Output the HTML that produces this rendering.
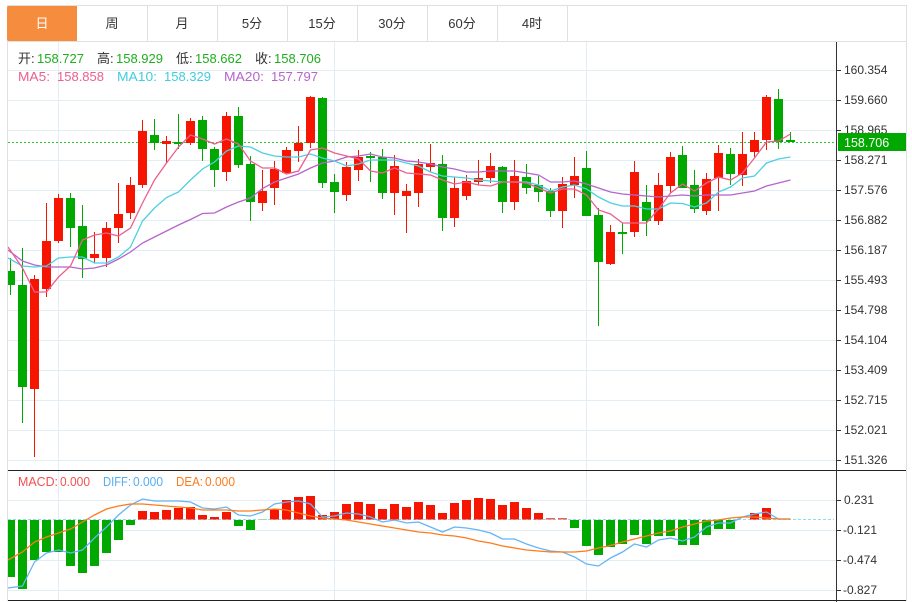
<!DOCTYPE html>
<html lang="zh">
<head>
<meta charset="utf-8">
<title>K线图</title>
<style>
html,body{margin:0;padding:0;background:#fff;width:912px;height:602px;overflow:hidden}
svg{display:block}
text{font-family:"Liberation Sans","Noto Sans CJK SC",sans-serif}
.tab{font-size:13px;fill:#333;text-anchor:middle}
.ax{font-size:12px;fill:#333}
.leg{font-size:13px}
</style>
</head>
<body>
<svg width="912" height="602" viewBox="0 0 912 602" xmlns="http://www.w3.org/2000/svg">
<defs><clipPath id="c"><rect x="8" y="42" width="828" height="428"/></clipPath><clipPath id="m"><rect x="8" y="471" width="828" height="129"/></clipPath></defs>

<!-- frame & tabs -->
<rect x="7.5" y="5.5" width="899" height="595" fill="#fff" stroke="#e0e0e0"/>
<path d="M7 41.5H907" stroke="#e0e0e0" fill="none"/>
<path d="M147.500 5V41M217.500 5V41M287.500 5V41M357.500 5V41M427.500 5V41M497.500 5V41M567.500 5V41" stroke="#e0e0e0" fill="none"/>
<path d="M78 6H10a2 2 0 0 0-2 2V39a2 2 0 0 0 2 2H78z" fill="#f58c3e" transform="translate(-1 0)"/>
<text class="tab" x="42" y="28" style="fill:#fff">日</text>
<text class="tab" x="112" y="28">周</text>
<text class="tab" x="182" y="28">月</text>
<text class="tab" x="252" y="28">5分</text>
<text class="tab" x="322" y="28">15分</text>
<text class="tab" x="392" y="28">30分</text>
<text class="tab" x="462" y="28">60分</text>
<text class="tab" x="532" y="28">4时</text>

<!-- grid -->
<path d="M8 70.500H836M8 100.500H836M8 130.500H836M8 160.500H836M8 190.500H836M8 220.500H836M8 250.500H836M8 280.500H836M8 310.500H836M8 340.500H836M8 370.500H836M8 400.500H836M8 430.500H836M8 460.500H836M8 500.500H836M8 530.500H836M8 560.500H836M8 590.500H836" stroke="#e3edf4" fill="none"/>
<path d="M58.500 42V600M334.500 42V600M586.500 42V600" stroke="#e3edf4" fill="none"/>
<path d="M8 142.500H836" stroke="#33c433" stroke-dasharray="2 2" fill="none"/>

<g clip-path="url(#c)">
<!-- red wicks and bodies -->
<path d="M34.500 275V457M46.500 203V297M58.500 194V243M94.500 232V263M106.500 222V267M118.500 183V243M130.500 177V219M142.500 120V188M166.500 136V163M190.500 118V145M226.500 112V181M262.500 170V211M274.500 161V205M286.500 147V173M298.500 126V162M310.500 96V148M346.500 162V201M358.500 150V181M394.500 155V215M406.500 184V233M418.500 159V207M430.500 144V172M454.500 177V227M466.500 175V200M478.500 160V185M490.500 153V183M514.500 160V210M562.500 177V228M574.500 157V198M610.500 225V265M634.500 161V237M658.500 173V225M670.500 152V193M706.500 173V215M718.500 145V211M742.500 132V186M754.500 132V157M766.500 95V150" stroke="#f51500" fill="none"/>
<path fill="#f51500" d="M30 279h9V389h-9zM42 241h9V289h-9zM54 198h9V241h-9zM90 254h9V258h-9zM102 228h9V258h-9zM114 214h9V228h-9zM126 185h9V213h-9zM138 131h9V185h-9zM162 141h9V144h-9zM186 121h9V143h-9zM222 116h9V172h-9zM258 191h9V203h-9zM270 169h9V188h-9zM282 150h9V173h-9zM294 143h9V151h-9zM306 97h9V143h-9zM342 167h9V195h-9zM354 157h9V170h-9zM390 166h9V193h-9zM402 191h9V196h-9zM414 164h9V193h-9zM426 163h9V167h-9zM450 188h9V218h-9zM462 181h9V196h-9zM474 178h9V182h-9zM486 166h9V178h-9zM510 176h9V202h-9zM558 184h9V211h-9zM570 176h9V185h-9zM606 232h9V264h-9zM630 172h9V232h-9zM654 185h9V221h-9zM666 157h9V186h-9zM702 179h9V211h-9zM714 153h9V178h-9zM738 154h9V175h-9zM750 140h9V152h-9zM762 97h9V140h-9z"/>
<!-- green wicks and bodies -->
<path d="M10.500 258V295M22.500 248V423M70.500 193V247M82.500 205V278M154.500 119V150M178.500 114V149M202.500 116V161M214.500 147V187M238.500 107V168M250.500 156V221M322.500 97V188M334.500 174V213M370.500 152V182M382.500 149V199M442.500 155V231M502.500 166V213M526.500 164V194M538.500 176V202M550.500 188V217M586.500 151V216M598.500 208V326M622.500 223V254M646.500 185V236M682.500 146V188M694.500 170V213M730.500 148V185M778.500 89V149M790.500 132V142" stroke="#00a800" fill="none"/>
<path fill="#00a800" d="M6 271h9V285h-9zM18 285h9V387h-9zM66 198h9V228h-9zM78 226h9V259h-9zM150 135h9V143h-9zM174 142h9V144h-9zM198 120h9V149h-9zM210 149h9V170h-9zM234 116h9V165h-9zM246 164h9V202h-9zM318 98h9V183h-9zM330 182h9V192h-9zM366 156h9V158h-9zM378 157h9V193h-9zM438 164h9V218h-9zM498 167h9V202h-9zM522 177h9V188h-9zM534 185h9V192h-9zM546 191h9V211h-9zM582 168h9V216h-9zM594 215h9V262h-9zM618 232h9V234h-9zM642 202h9V221h-9zM678 155h9V188h-9zM690 185h9V209h-9zM726 154h9V174h-9zM774 99h9V142h-9zM786 140h9V142h-9z"/>
<!-- MA20 -->
<polyline fill="none" stroke="#b565cc" stroke-width="1.300" points="8,250 22.500,261 34.500,265 46.500,267 58.500,267 70.500,267 82.500,269 94.500,268 106.500,265 118.500,259 130.500,252 142.500,243 154.500,237 166.500,231 178.500,225 190.500,219.500 202.500,213.500 214.500,213 226.500,207 238.500,202 250.500,198 262.500,188.500 274.500,182 286.500,178 298.500,174 310.500,168 322.500,163 334.500,161 346.500,157 358.500,156 370.500,154 382.500,157 394.500,158 406.500,161 418.500,162 430.500,164 442.500,167 454.500,169 466.500,172 478.500,172 490.500,171 502.500,171 514.500,171 526.500,173 538.500,175 550.500,182 562.500,182 574.500,181 586.500,184 598.500,188 610.500,192 622.500,194 634.500,195 646.500,196 658.500,197 670.500,196 682.500,195 694.500,196 706.500,195 718.500,195 730.500,195 742.500,193 754.500,191 766.500,186 778.500,183 790.500,180"/>
<!-- MA10 -->
<polyline fill="none" stroke="#4dd0e1" stroke-width="1.300" points="8,258 22.500,266 34.500,267 46.500,266 58.500,258 70.500,257 82.500,257 94.500,263 106.500,263 118.500,257 130.500,247 142.500,221 154.500,208 166.500,197.500 178.500,192 190.500,180 202.500,169 214.500,162 226.500,151 238.500,146 250.500,147 262.500,153 274.500,156 286.500,157 298.500,157 310.500,154 322.500,158 334.500,161 346.500,166 358.500,164 370.500,160 382.500,160 394.500,160 406.500,163 418.500,166 430.500,172 442.500,176 454.500,177 466.500,178 478.500,180 490.500,181 502.500,182 514.500,182 526.500,182 538.500,185 550.500,191 562.500,187 574.500,185 586.500,189 598.500,197 610.500,203 622.500,206 634.500,206 646.500,209 658.500,209 670.500,203 682.500,203.500 694.500,207 706.500,203 718.500,192 730.500,187 742.500,178 754.500,176 766.500,163 778.500,159 790.500,157"/>
<!-- MA5 -->
<polyline fill="none" stroke="#ec5f8f" stroke-width="1.300" points="8,247 22.500,268 34.500,292 46.500,292 58.500,277 70.500,266 82.500,240 94.500,235 106.500,233 118.500,236 130.500,228 142.500,203 154.500,180 166.500,163 178.500,147 190.500,135 202.500,139 214.500,144 226.500,139 238.500,144 250.500,161 262.500,168 274.500,168 286.500,174 298.500,171 310.500,150 322.500,148 334.500,153 346.500,156 358.500,159 370.500,171 382.500,173 394.500,168 406.500,173 418.500,174 430.500,175 442.500,180 454.500,184 466.500,182 478.500,185 490.500,186 502.500,182 514.500,182 526.500,183 538.500,188 550.500,193 562.500,189 574.500,189 586.500,195 598.500,210 610.500,214 622.500,223 634.500,223 646.500,223 658.500,209 670.500,193 682.500,184 694.500,191 706.500,183 718.500,177 730.500,180 742.500,173 754.500,158 766.500,142 778.500,141 790.500,134"/>
</g>

<g clip-path="url(#m)">
<path d="M8 519.500H834" stroke="#8fdcf0" stroke-dasharray="3 2" fill="none"/>
<path fill="#00a800" d="M6 520h9V577h-9zM18 520h9V589h-9zM30 520h9V560h-9zM42 520h9V552h-9zM54 520h9V552h-9zM66 520h9V566h-9zM78 520h9V573h-9zM90 520h9V566h-9zM102 520h9V553h-9zM114 520h9V540h-9zM126 520h9V525h-9zM234 520h9V526h-9zM246 520h9V530h-9zM570 520h9V528h-9zM582 520h9V546h-9zM594 520h9V555h-9zM606 520h9V547h-9zM618 520h9V544h-9zM630 520h9V535h-9zM642 520h9V544h-9zM654 520h9V536h-9zM666 520h9V536h-9zM678 520h9V545h-9zM690 520h9V545h-9zM702 520h9V535h-9zM714 520h9V529h-9zM726 520h9V529h-9z"/>
<rect x="258" y="519" width="9" height="1" fill="#9fdcae"/>
<path fill="#f51500" d="M138 511h9V519.500h-9zM150 512h9V519.500h-9zM162 510h9V519.500h-9zM174 508h9V519.500h-9zM186 507h9V519.500h-9zM198 515h9V519.500h-9zM210 517h9V519.500h-9zM222 512h9V519.500h-9zM270 509h9V519.500h-9zM282 500h9V519.500h-9zM294 497h9V519.500h-9zM306 496h9V519.500h-9zM318 515h9V519.500h-9zM330 512h9V519.500h-9zM342 504h9V519.500h-9zM354 502h9V519.500h-9zM366 504h9V519.500h-9zM378 509h9V519.500h-9zM390 504h9V519.500h-9zM402 507h9V519.500h-9zM414 502h9V519.500h-9zM426 505h9V519.500h-9zM438 513h9V519.500h-9zM450 503h9V519.500h-9zM462 500h9V519.500h-9zM474 498h9V519.500h-9zM486 499h9V519.500h-9zM498 505h9V519.500h-9zM510 502h9V519.500h-9zM522 508h9V519.500h-9zM534 513h9V519.500h-9zM750 513h9V519.500h-9zM762 508h9V519.500h-9z"/>
<rect x="546" y="518" width="9" height="1.500" fill="#f0605a"/><rect x="558" y="518" width="9" height="1.500" fill="#f0605a"/>
<polyline fill="none" stroke="#64b5f6" stroke-width="1.300" points="8,588 22.500,586 34.500,562 46.500,553 58.500,550 70.500,553 82.500,550 94.500,538 106.500,527 118.500,515 130.500,505 142.500,499 154.500,501 166.500,501 178.500,501 190.500,502 202.500,508 214.500,509 226.500,507 238.500,515 250.500,516 262.500,512 274.500,504 286.500,502 298.500,501 310.500,504 322.500,517 334.500,516 346.500,513 358.500,514 370.500,517 382.500,522 394.500,520 406.500,523 418.500,522 430.500,527 442.500,532 454.500,527 466.500,528 478.500,530 490.500,533 502.500,539 514.500,539 526.500,544 538.500,548 550.500,551 562.500,552 574.500,557 586.500,564 598.500,566 610.500,558 622.500,552 634.500,544 646.500,547 658.500,540 670.500,538 682.500,541 694.500,537 706.500,527 718.500,523 730.500,523 742.500,517 754.500,514 766.500,512 778.500,519 790.500,519"/>
<polyline fill="none" stroke="#ff7b1a" stroke-width="1.300" points="8,560 22.500,552 34.500,542 46.500,537 58.500,533 70.500,529 82.500,522 94.500,515 106.500,509 118.500,506 130.500,504 142.500,504 154.500,505 166.500,506 178.500,507 190.500,508 202.500,510 214.500,510 226.500,510 238.500,511 250.500,511 262.500,510 274.500,509 286.500,510 298.500,513 310.500,516 322.500,518 334.500,519 346.500,520 358.500,522 370.500,524 382.500,526 394.500,528 406.500,530 418.500,532 430.500,533 442.500,535 454.500,536 466.500,538 478.500,541 490.500,543 502.500,546 514.500,548 526.500,550 538.500,551 550.500,552 562.500,552 574.500,552 586.500,551 598.500,548 610.500,545.500 622.500,542 634.500,539 646.500,536 658.500,533 670.500,531 682.500,527 694.500,524 706.500,521 718.500,520 730.500,518 742.500,517 754.500,517 766.500,518 778.500,519 790.500,519"/>
</g>

<!-- axes -->
<path d="M8 470.500H906M8 600.500H906" stroke="#222" fill="none"/>
<path d="M836.500 42V602" stroke="#333" fill="none"/>
<path d="M837 70.500h4M837 100.500h4M837 130.500h4M837 160.500h4M837 190.500h4M837 220.500h4M837 250.500h4M837 280.500h4M837 310.500h4M837 340.500h4M837 370.500h4M837 400.500h4M837 430.500h4M837 460.500h4M837 500.500h4M837 530.500h4M837 560.500h4M837 590.500h4" stroke="#333" fill="none"/>

<g class="ax">
<text class="ax" x="844" y="74">160.354</text>
<text class="ax" x="844" y="104">159.660</text>
<text class="ax" x="844" y="134">158.965</text>
<text class="ax" x="844" y="164">158.271</text>
<text class="ax" x="844" y="194">157.576</text>
<text class="ax" x="844" y="224">156.882</text>
<text class="ax" x="844" y="254">156.187</text>
<text class="ax" x="844" y="284">155.493</text>
<text class="ax" x="844" y="314">154.798</text>
<text class="ax" x="844" y="344">154.104</text>
<text class="ax" x="844" y="374">153.409</text>
<text class="ax" x="844" y="404">152.715</text>
<text class="ax" x="844" y="434">152.021</text>
<text class="ax" x="844" y="464">151.326</text>
<text class="ax" x="844" y="504">0.231</text>
<text class="ax" x="843" y="534">-0.121</text>
<text class="ax" x="843" y="564">-0.474</text>
<text class="ax" x="843" y="594">-0.827</text>
</g>
<rect x="838" y="133" width="68" height="18" fill="#00a800"/>
<text class="ax" x="844" y="147" style="fill:#fff;font-size:12.500px">158.706</text>

<!-- legend -->
<g class="leg">
<text class="leg" x="18" y="63" fill="#333">开:</text><text class="leg" x="37" y="63" fill="#1fad1f">158.727</text>
<text class="leg" x="97" y="63" fill="#333">高:</text><text class="leg" x="116" y="63" fill="#1fad1f">158.929</text>
<text class="leg" x="176" y="63" fill="#333">低:</text><text class="leg" x="195" y="63" fill="#1fad1f">158.662</text>
<text class="leg" x="255" y="63" fill="#333">收:</text><text class="leg" x="274" y="63" fill="#1fad1f">158.706</text>
<text class="leg" x="18" y="81" fill="#ec5f8f" textLength="32" lengthAdjust="spacingAndGlyphs">MA5:</text><text class="leg" x="57" y="81" fill="#ec5f8f">158.858</text>
<text class="leg" x="117" y="81" fill="#3fcde0" textLength="40" lengthAdjust="spacingAndGlyphs">MA10:</text><text class="leg" x="164" y="81" fill="#3fcde0">158.329</text>
<text class="leg" x="224" y="81" fill="#b565cc" textLength="40" lengthAdjust="spacingAndGlyphs">MA20:</text><text class="leg" x="271" y="81" fill="#b565cc">157.797</text>
<text class="leg" x="18" y="486" fill="#f25050" textLength="40" lengthAdjust="spacingAndGlyphs">MACD:</text><text class="leg" x="60" y="486" fill="#f25050" textLength="30" lengthAdjust="spacingAndGlyphs">0.000</text>
<text class="leg" x="103" y="486" fill="#55aef5" textLength="28" lengthAdjust="spacingAndGlyphs">DIFF:</text><text class="leg" x="133" y="486" fill="#55aef5" textLength="30" lengthAdjust="spacingAndGlyphs">0.000</text>
<text class="leg" x="176" y="486" fill="#ff7b1a" textLength="27" lengthAdjust="spacingAndGlyphs">DEA:</text><text class="leg" x="205" y="486" fill="#ff7b1a" textLength="30" lengthAdjust="spacingAndGlyphs">0.000</text>
</g>
</svg>
</body>
</html>
